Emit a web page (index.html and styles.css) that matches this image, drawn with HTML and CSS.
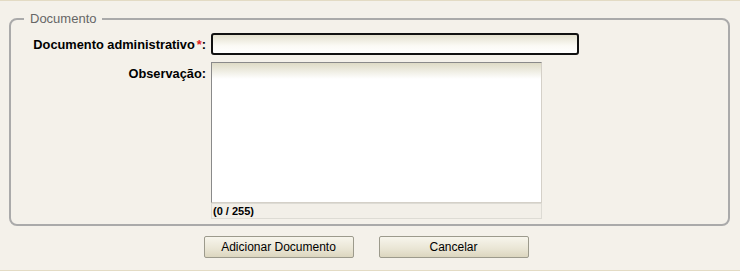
FILE: index.html
```html
<!DOCTYPE html>
<html lang="pt-BR">
<head>
    <meta charset="UTF-8">
    <title>Documento</title>
    <link rel="stylesheet" href="styles.css">
</head>
<body>
    <div class="page">
        <fieldset class="group">
            <legend>Documento</legend>
            <div class="form-grid">
                <label class="field-label" for="doc">Documento administrativo<span class="req">*</span>:</label>
                <input type="text" id="doc" class="text-input" autofocus>
                <label class="field-label" for="obs">Observação:</label>
                <div class="memo">
                    <textarea id="obs" class="memo-box"></textarea>
                    <div class="memo-count">(0 / 255)</div>
                </div>
            </div>
        </fieldset>
        <div class="actions">
            <button class="btn btn-add">Adicionar Documento</button>
            <button class="btn">Cancelar</button>
        </div>
    </div>
</body>
</html>
```

FILE: styles.css
```css
body {
    margin: 0;
    background-color: #f4f1ea;
    font-family: Tahoma, 'Liberation Sans', Arial, sans-serif;
    font-size: 12px;
}

.page {
    height: 269px;
    border-top: 1px solid #e3dbc4;
    border-bottom: 1px solid #e3dbc4;
}

.group {
    margin: 10px 10px 0 9px;
    padding: 7px 0 5px 0;
    border: 2px solid #aaaaaa;
    border-radius: 8px;
}

.group legend {
    color: #666666;
    padding: 0 6px;
    margin-left: 13px;
    font-size: 13px;
}

.form-grid {
    display: grid;
    grid-template-columns: 195px 1fr;
    column-gap: 5px;
    row-gap: 7px;
    align-items: start;
}

.field-label {
    text-align: right;
    font-weight: bold;
    font-size: 12.8px;
    color: #000;
    padding-top: 4px;
}

.req {
    color: #e02020;
    padding-left: 2px;
}

.text-input {
    width: 368px;
    height: 22px;
    margin: 0;
    padding: 0 4px;
    box-sizing: border-box;
    border: 2px solid #111;
    border-radius: 3px;
    background: linear-gradient(#e4e1cf, #fbfaf5 60%, #ffffff);
    font-family: inherit;
    font-size: 12px;
    outline: none;
}

.memo {
    width: 331px;
}

.memo-box {
    display: block;
    width: 331px;
    height: 141px;
    margin: 0;
    padding: 2px;
    box-sizing: border-box;
    border: 1px solid #8a8a8a;
    border-right-color: #d4d0c8;
    border-bottom-color: #d4d0c8;
    background: linear-gradient(#dedbc6, #ffffff 16px);
    resize: none;
    font-family: inherit;
    font-size: 12px;
}

.memo-count {
    height: 16px;
    line-height: 14px;
    box-sizing: border-box;
    border: 1px solid #dddbd4;
    background: #f2efe8;
    font-weight: bold;
    font-size: 11px;
    padding-left: 1px;
}

.actions {
    display: flex;
    justify-content: center;
    gap: 25px;
    margin-top: 10px;
    padding-right: 8px;
}

.btn {
    width: 150px;
    height: 22px;
    border: 1px solid #9c9a8c;
    border-radius: 2px;
    background: linear-gradient(#f7f5ec, #e9e5d4 60%, #dcd6bf);
    font-family: inherit;
    font-size: 12px;
    color: #000;
    cursor: pointer;
}
```
